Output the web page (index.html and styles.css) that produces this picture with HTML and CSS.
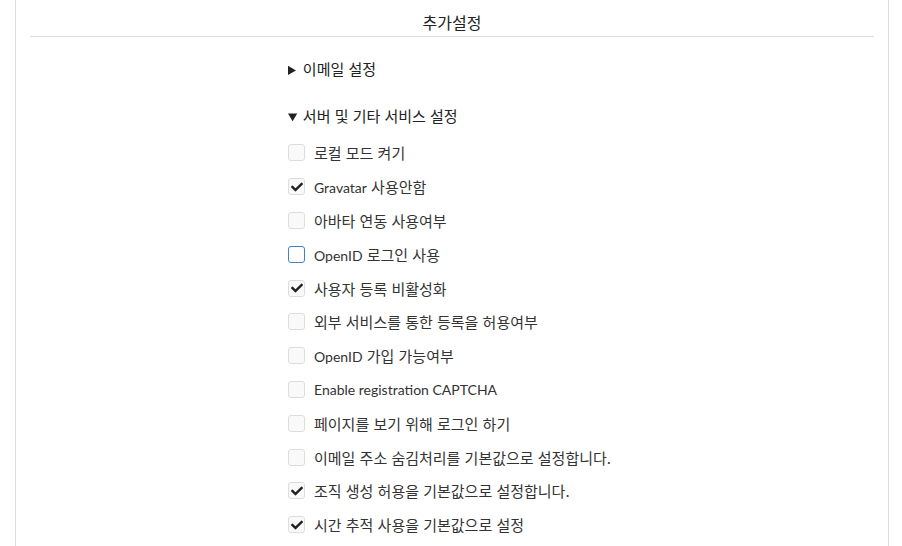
FILE: index.html
```html
<!DOCTYPE html>
<html lang="ko">

<head>
    <meta charset="UTF-8">
    <meta name="viewport" content="width=device-width, initial-scale=1.0">
    <title>추가설정</title>
    <link rel="stylesheet" href="styles.css">
</head>

<body>
    <div class="panel">
        <h2 class="panel-title">추가설정</h2>

        <div class="settings">
            <details class="group">
                <summary>이메일 설정</summary>
            </details>

            <details class="group" open>
                <summary>서버 및 기타 서비스 설정</summary>

                <label class="row"><span class="box"></span>로컬 모드 켜기</label>
                <label class="row"><span class="box checked"><svg viewBox="0 0 512 512"><path d="M173.9 439.4l-166.4-166.4c-10-10-10-26.2 0-36.2l36.2-36.2c10-10 26.2-10 36.2 0L192 312.7 432.1 72.6c10-10 26.2-10 36.2 0l36.2 36.2c10 10 10 26.2 0 36.2l-294.4 294.4c-10 10-26.2 10-36.2 0z"/></svg></span><span><span class="en">Gravatar</span> 사용안함</span></label>
                <label class="row"><span class="box"></span>아바타 연동 사용여부</label>
                <label class="row"><span class="box focus"></span><span><span class="en">OpenID</span> 로그인 사용</span></label>
                <label class="row"><span class="box checked"><svg viewBox="0 0 512 512"><path d="M173.9 439.4l-166.4-166.4c-10-10-10-26.2 0-36.2l36.2-36.2c10-10 26.2-10 36.2 0L192 312.7 432.1 72.6c10-10 26.2-10 36.2 0l36.2 36.2c10 10 10 26.2 0 36.2l-294.4 294.4c-10 10-26.2 10-36.2 0z"/></svg></span>사용자 등록 비활성화</label>
                <label class="row"><span class="box"></span>외부 서비스를 통한 등록을 허용여부</label>
                <label class="row"><span class="box"></span><span><span class="en">OpenID</span> 가입 가능여부</span></label>
                <label class="row"><span class="box"></span><span class="en">Enable registration CAPTCHA</span></label>
                <label class="row"><span class="box"></span>페이지를 보기 위해 로그인 하기</label>
                <label class="row"><span class="box"></span>이메일 주소 숨김처리를 기본값으로 설정합니다.</label>
                <label class="row"><span class="box checked"><svg viewBox="0 0 512 512"><path d="M173.9 439.4l-166.4-166.4c-10-10-10-26.2 0-36.2l36.2-36.2c10-10 26.2-10 36.2 0L192 312.7 432.1 72.6c10-10 26.2-10 36.2 0l36.2 36.2c10 10 10 26.2 0 36.2l-294.4 294.4c-10 10-26.2 10-36.2 0z"/></svg></span>조직 생성 허용을 기본값으로 설정합니다.</label>
                <label class="row"><span class="box checked"><svg viewBox="0 0 512 512"><path d="M173.9 439.4l-166.4-166.4c-10-10-10-26.2 0-36.2l36.2-36.2c10-10 26.2-10 36.2 0L192 312.7 432.1 72.6c10-10 26.2-10 36.2 0l36.2 36.2c10 10 10 26.2 0 36.2l-294.4 294.4c-10 10-26.2 10-36.2 0z"/></svg></span>시간 추적 사용을 기본값으로 설정</label>
            </details>
        </div>
    </div>
</body>

</html>
```

FILE: styles.css
```css
html,
body {
    margin: 0;
    padding: 0;
    background-color: #fff;
}

body {
    font-family: "Noto Sans CJK KR", sans-serif;
    font-size: 15px;
    color: #333;
}

.en {
    font-family: Lato, "Noto Sans CJK KR", sans-serif;
    font-size: 14px;
}

.panel {
    margin: 0 13px 0 15px;
    padding: 0 14px;
    min-height: 100vh;
    border-left: 1px solid #ddd;
    border-right: 1px solid #ddd;
    box-sizing: border-box;
}

.panel-title {
    margin: 0;
    padding-top: 9px;
    height: 27px;
    line-height: 26px;
    font-size: 16px;
    font-weight: normal;
    text-align: center;
    color: #222;
    border-bottom: 1px solid #ddd;
}

.settings {
    padding-left: 258px;
    padding-top: 22px;
}

.group summary {
    line-height: 20px;
    cursor: pointer;
    color: #222;
}

.group summary::marker {
    font-size: 14px;
}

.group + .group {
    margin-top: 27px;
}

.group[open] summary {
    margin-bottom: 10px;
}

.row {
    display: flex;
    align-items: center;
    gap: 9px;
    height: 33.8px;
}

.box {
    width: 15px;
    height: 15px;
    border: 1px solid #ddd;
    border-radius: 3px;
    background-color: #f9f9f9;
    display: flex;
    align-items: center;
    justify-content: center;
    flex-shrink: 0;
}

.box.focus {
    border-color: #4183c4;
    background-color: #fff;
}

.box svg {
    width: 12px;
    height: 12px;
    fill: #222;
}
```
